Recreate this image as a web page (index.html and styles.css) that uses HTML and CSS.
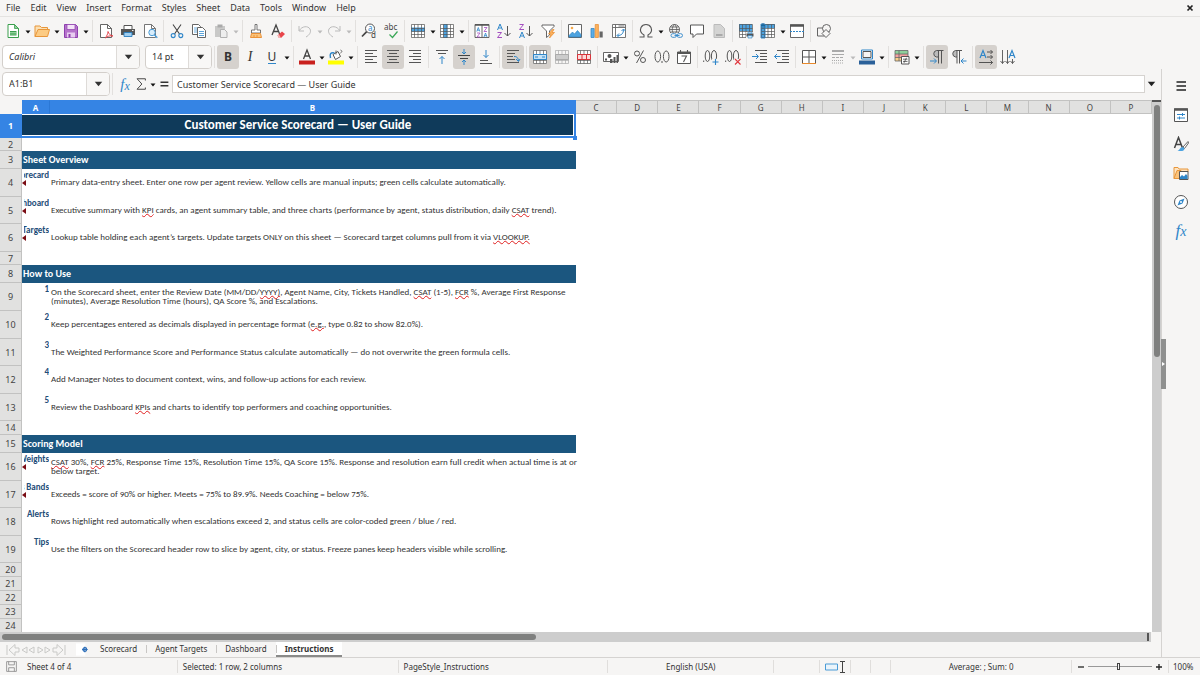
FILE: index.html
```html
<!DOCTYPE html>
<html lang="en">
<head>
<meta charset="utf-8">
<title>Customer Service Scorecard</title>
<link rel="stylesheet" href="styles.css">
</head>
<body>
<svg class="sprite" aria-hidden="true">
  <defs>
    <symbol id="caret" viewBox="0 0 6 4"><path d="M0.5 0.5h5L3 3.5z" fill="currentColor"/></symbol>
    <symbol id="grid" viewBox="0 0 16 16"><path d="M1.500 1.500h13v13h-13zM1.500 5.500h13M1.500 8.500h13M1.500 11.500h13M4.500 1.500v13M8 1.500v13M11.500 1.500v13" fill="none" stroke="currentColor" stroke-width=".7"/></symbol>
  </defs>
</svg>

<nav class="menubar">
  <button>File</button><button>Edit</button><button>View</button><button>Insert</button><button>Format</button><button>Styles</button><button>Sheet</button><button>Data</button><button>Tools</button><button>Window</button><button>Help</button>
  <button class="close" aria-label="Close document"><svg viewBox="0 0 8 8"><path d="M1.500 1.500l5 5M6.500 1.500l-5 5" stroke="#222" stroke-width="1.700"/></svg></button>
</nav>

<div class="toolbar">
  <button class="tb" aria-label="New"><svg viewBox="0 0 16 16"><path d="M3 1.500h6.500l4 4v9H3z" fill="#fff" stroke="#3a9e4d"/><path d="M9.500 1.500v4h4z" fill="#8fd19b" stroke="#3a9e4d" stroke-width=".8"/><path d="M5 8h6.500v4.500H5z" fill="#3a9e4d"/><path d="M5 9.500h6.500M5 11h6.500" stroke="#c8f0cd" stroke-width=".6"/></svg></button><button class="dd" aria-label="New options"><svg><use href="#caret"/></svg></button>
  <button class="tb" aria-label="Open"><svg viewBox="0 0 16 16"><path d="M1 13.500V3h5l1.500 1.500h6V7" fill="#fbe0b4" stroke="#e8963a"/><path d="M1 13.500L4 6.500h11.500l-2 7z" fill="#fccb83" stroke="#e8963a"/></svg></button><button class="dd" aria-label="Open options"><svg><use href="#caret"/></svg></button>
  <button class="tb" aria-label="Save"><svg viewBox="0 0 16 16"><path d="M1.500 1.500h11l2 2v11h-13z" fill="#b573cb" stroke="#8e3fae"/><path d="M4 1.500h8v5H4z" fill="#f4e3f8" stroke="#8e3fae" stroke-width=".7"/><path d="M4 9.500h8v5H4z" fill="#e8cdf0"/><path d="M5.500 11v3.500h2V11z" fill="#8e3fae"/></svg></button><button class="dd" aria-label="Save options"><svg><use href="#caret"/></svg></button>
  <i class="sep"></i>
  <button class="tb" aria-label="Export as PDF"><svg viewBox="0 0 16 16"><path d="M2.500 1.500h7l4 4v9h-11z" fill="#fff" stroke="#555" stroke-width=".9"/><path d="M9.500 1.500v4h4" fill="none" stroke="#555" stroke-width=".9"/><path d="M7.500 15c1-2 2.500-4 2.500-6.500 1 2.500 2 4 5 4.500-3-.5-5.500 0-7.500 2z" fill="#fff" stroke="#e0383f" stroke-width=".9"/></svg></button>
  <button class="tb" aria-label="Print"><svg viewBox="0 0 16 16"><path d="M4 6V2.500h8V6" fill="#fff" stroke="#555"/><path d="M1 6h14v6H1z" fill="#555"/><path d="M4 9.500h8v4H4z" fill="#9fcdef" stroke="#2a7fc0" stroke-width=".9"/><path d="M12 7.500h1.500" stroke="#fff" stroke-width=".9"/></svg></button>
  <button class="tb" aria-label="Print preview"><svg viewBox="0 0 16 16"><path d="M2.500 1.500h7l4 4v9h-11z" fill="#fff" stroke="#666" stroke-width=".9"/><path d="M9.500 1.500v4h4" fill="none" stroke="#666" stroke-width=".9"/><circle cx="10" cy="9.500" r="3.200" fill="#d8edfb" stroke="#4a9bd6"/><path d="M12.300 11.800l3 3" stroke="#4a9bd6" stroke-width="1.400"/></svg></button>
  <i class="sep"></i>
  <button class="tb" aria-label="Cut"><svg viewBox="0 0 16 16"><path d="M4 1.500l6.500 9.500M12 1.500L5.500 11" stroke="#444" stroke-width="1.100"/><circle cx="4.200" cy="12.600" r="2" fill="none" stroke="#2f86c9" stroke-width="1.100"/><circle cx="11.800" cy="12.600" r="2" fill="none" stroke="#2f86c9" stroke-width="1.100"/></svg></button>
  <button class="tb" aria-label="Copy"><svg viewBox="0 0 16 16"><path d="M1.500 1.500h6l2 2v8h-8z" fill="#fff" stroke="#555" stroke-width=".9"/><path d="M3 5h3M3 7h3M3 9h3" stroke="#4a9bd6" stroke-width=".8"/><path d="M6.500 4.500h5l3 3v7h-8z" fill="#fff" stroke="#555" stroke-width=".9"/><path d="M8 8.500h5M8 10.500h5M8 12.500h5" stroke="#4a9bd6" stroke-width=".9"/></svg></button>
  <button class="tb" aria-label="Paste" disabled><svg viewBox="0 0 16 16"><path d="M2 3h10v11H2z" fill="#c9c9c8"/><path d="M4.500 1.500h5v3h-5z" fill="#aaa"/><path d="M7.500 6.500h4l2.500 2.500v5.500H7.500z" fill="#eee" stroke="#aaa" stroke-width=".9"/></svg></button><button class="dd" aria-label="Paste options" disabled><svg><use href="#caret"/></svg></button>
  <i class="sep"></i>
  <button class="tb" aria-label="Clone formatting"><svg viewBox="0 0 16 16"><path d="M7 1.500h2v5.500h3.500v3h-9V7H7z" fill="#fff" stroke="#666" stroke-width=".9"/><path d="M3.500 10.500h9l1 4h-11z" fill="#fbc37b" stroke="#e98a2b" stroke-width=".9"/><path d="M6 14v-2M9 14v-2" stroke="#e98a2b" stroke-width=".8"/></svg></button>
  <button class="tb" aria-label="Clear formatting"><svg viewBox="0 0 16 16"><path d="M2 12L6 2l4 10M3.500 8.500h5" fill="none" stroke="#444" stroke-width="1.300"/><path d="M7.500 12.500l4.500-4 3 2.500-4 4H9z" fill="#e8454a"/><path d="M7.500 12.500L9 15h2l-2.200-3.700z" fill="#f6b4b4"/></svg></button>
  <i class="sep"></i>
  <button class="tb" aria-label="Undo" disabled><svg viewBox="0 0 16 16"><path d="M2 3v5h5M2.300 7.500C5 3 11 2.500 13 6c1.500 3-.5 6-4 8" fill="none" stroke="#bbb"/></svg></button><button class="dd" aria-label="Undo history" disabled><svg><use href="#caret"/></svg></button>
  <button class="tb" aria-label="Redo" disabled><svg viewBox="0 0 16 16"><path d="M14 3v5H9M13.700 7.500C11 3 5 2.500 3 6c-1.500 3 .5 6 4 8" fill="none" stroke="#bbb"/></svg></button><button class="dd" aria-label="Redo history" disabled><svg><use href="#caret"/></svg></button>
  <i class="sep"></i>
  <button class="tb" aria-label="Find and replace"><svg viewBox="0 0 16 16"><circle cx="9" cy="5.500" r="4.500" fill="#fff" stroke="#555"/><path d="M5.700 8.700L1 13.500" stroke="#444" stroke-width="1.700"/><text x="7" y="8" class="g-blue">a</text><text x="10" y="15" class="g-dark">d</text></svg></button>
  <button class="tb" aria-label="Spelling"><svg viewBox="0 0 16 16"><text x="1" y="7" class="g-dark">abc</text><path d="M6.500 11.500l3 3 5-6" fill="none" stroke="#3aa757" stroke-width="1.200"/></svg></button>
  <i class="sep"></i>
  <button class="tb" aria-label="Row"><svg viewBox="0 0 16 16"><path d="M1.500 1.500h13v13h-13z" fill="#fff"/><path d="M1 4.500h14v4H1z" fill="#4da3e0"/><use href="#grid"/></svg></button><button class="dd" aria-label="Row options"><svg><use href="#caret"/></svg></button>
  <button class="tb" aria-label="Column"><svg viewBox="0 0 16 16"><path d="M1.500 1.500h13v13h-13z" fill="#fff"/><path d="M4.500 1h4v14h-4z" fill="#4da3e0"/><use href="#grid"/></svg></button><button class="dd" aria-label="Column options"><svg><use href="#caret"/></svg></button>
  <i class="sep"></i>
  <button class="tb" aria-label="Sort"><svg viewBox="0 0 16 16"><path d="M1 1.500h14v13H1zM8 1.500v13" fill="#fff" stroke="#555" stroke-width=".9"/><path d="M1 2h14" stroke="#555" stroke-width="1.500"/><path d="M2.800 8.500l1.500-4 1.500 4M3.300 7.200h2M10 14l1.500-4 1.500 4M10.500 12.700h2" fill="none" stroke="#2f86c9" stroke-width=".8"/><path d="M3 10h3l-3 4h3M10 4.500h3l-3 4h3" fill="none" stroke="#a44fc0" stroke-width=".8"/></svg></button>
  <button class="tb" aria-label="Sort ascending"><svg viewBox="0 0 16 16"><path d="M1.500 7L4 1l2.500 6M2.500 5h3" fill="none" stroke="#2f86c9"/><path d="M1.500 9.500h4l-4 5h4.500" fill="none" stroke="#a44fc0"/><path d="M11.500 3v10M8.500 10l3 3 3-3" fill="none" stroke="#555"/></svg></button>
  <button class="tb" aria-label="Sort descending"><svg viewBox="0 0 16 16"><path d="M1.500 15L4 9l2.500 6M2.500 13h3" fill="none" stroke="#2f86c9"/><path d="M1.500 1.500h4l-4 5h4.500" fill="none" stroke="#a44fc0"/><path d="M11.500 3v10M8.500 10l3 3 3-3" fill="none" stroke="#555"/></svg></button>
  <button class="tb" aria-label="AutoFilter"><svg viewBox="0 0 16 16"><path d="M2 2h12v1.500L9.500 8v4l-3 2.500V8L2 3.500z" fill="#fff" stroke="#555" stroke-width=".9"/><path d="M12.500 6.500L8.500 11h2.500l-1.500 4 5-5.500H12l2-3z" fill="#fbb25f" stroke="#e98a2b" stroke-width=".7"/></svg></button>
  <i class="sep"></i>
  <button class="tb" aria-label="Image"><svg viewBox="0 0 16 16"><path d="M1.500 1.500h13v13h-13z" fill="#fff" stroke="#666"/><path d="M2 12.500L5.500 9l2 2 3-3.500 3.500 4v2.500H2z" fill="#4da3e0" stroke="#2a7fc0" stroke-width=".6"/><circle cx="5" cy="5" r="1.300" fill="#f5a94c"/></svg></button>
  <button class="tb" aria-label="Chart"><svg viewBox="0 0 16 16"><path d="M2 5.500h3.200v9H2z" fill="#5baee8" stroke="#2a7fc0" stroke-width=".7"/><path d="M6.200 1.500h3.200v13H6.200z" fill="#fbb25f" stroke="#e98a2b" stroke-width=".7"/><path d="M10.500 8.500h3.200v6h-3.200z" fill="#666"/></svg></button>
  <button class="tb" aria-label="Pivot table"><svg viewBox="0 0 16 16"><path d="M1.500 1.500h13v13h-13zM1.500 4.500h13M4.500 1.500v13M7.500 3h6" fill="#fff" stroke="#666" stroke-width=".9"/><path d="M6.500 12.500c4 0 6-2 6-6M8 10.500l-2 2 2 2M10.500 8l2-2 2 2" fill="none" stroke="#2f86c9"/></svg></button>
  <i class="sep"></i>
  <button class="tb" aria-label="Special character"><svg viewBox="0 0 16 16"><path d="M1.500 14h4.500v-2C2.500 10 2 7 3 4.500 4 2.500 6 1.500 8 1.500s4 1 5 3c1 2.500.5 5.500-3 7.500v2h4.500" fill="none" stroke="#555" stroke-width="1.100"/></svg></button><button class="dd" aria-label="Special character options"><svg><use href="#caret"/></svg></button>
  <button class="tb" aria-label="Hyperlink"><svg viewBox="0 0 16 16"><circle cx="7.500" cy="6.500" r="5" fill="none" stroke="#555" stroke-width=".9"/><path d="M2.500 6.500h10M3.500 4h8M3.500 9h8M7.500 1.500c-3 3-3 7 0 10M7.500 1.500c3 3 3 7 0 10" fill="none" stroke="#555" stroke-width=".8"/><path d="M4 10h12v5H4z" fill="#f6f5f4"/><rect x="4" y="10.700" width="5.500" height="3.600" rx="1.800" fill="none" stroke="#2f86c9" stroke-width=".9"/><rect x="10" y="10.700" width="5.500" height="3.600" rx="1.800" fill="none" stroke="#2f86c9" stroke-width=".9"/><path d="M7.500 12.500h5" stroke="#2f86c9" stroke-width=".9"/></svg></button>
  <button class="tb" aria-label="Comment"><svg viewBox="0 0 16 16"><path d="M1.500 2h13v9H7.500L4 14.500V11H1.500z" fill="#fff" stroke="#555"/></svg></button>
  <button class="tb" aria-label="Headers and footers" disabled><svg viewBox="0 0 16 16"><path d="M3 1.500h6.500l4 4v9H3z" fill="#d4d4d3" stroke="#bbb"/><path d="M5 11h6.500v2H5z" fill="#aaa"/></svg></button>
  <i class="sep"></i>
  <button class="tb" aria-label="Print area"><svg viewBox="0 0 16 16"><path d="M1.500 1.500h13v13h-13z" fill="#fff"/><path d="M1 1h13v7H1z" fill="#4da3e0"/><use href="#grid"/><path d="M8 9h8v6H8z" fill="#f6f5f4"/><path d="M8.500 10.500h7v3h-7z" fill="#555"/><path d="M10 9h4v1.500h-4zM10 12.500h4V15h-4z" fill="#cfe6f7" stroke="#2a7fc0" stroke-width=".6"/></svg></button>
  <button class="tb" aria-label="Freeze rows and columns"><svg viewBox="0 0 16 16"><path d="M1.500 1.500h13v13h-13z" fill="#fff"/><path d="M1 1h14v4H1zM1 1h4v14H1z" fill="#4da3e0"/><use href="#grid"/><path d="M1 1h4v14H1z" fill="none" stroke="#2a7fc0" stroke-width=".9"/><path d="M3 0v5M1 2.500h4" stroke="#12659f" stroke-width=".9"/></svg></button><button class="dd" aria-label="Freeze options"><svg><use href="#caret"/></svg></button>
  <button class="tb" aria-label="Split window"><svg viewBox="0 0 16 16"><path d="M1.500 2h13v12.500h-13z" fill="#fff" stroke="#666"/><path d="M1 2.500h14" stroke="#555" stroke-width="2.500"/><path d="M1 8.500h14" stroke="#2f86c9" stroke-dasharray="2 1"/></svg></button>
  <i class="sep"></i>
  <button class="tb" aria-label="Draw functions"><svg viewBox="0 0 16 16"><path d="M1.500 5h7v8h-7z" fill="#f6f5f4" stroke="#555" stroke-width=".9"/><circle cx="10.500" cy="5.500" r="4" fill="#f6f5f4" stroke="#555" stroke-width=".9"/><path d="M10 6.500l4 4-4 4-4-4z" fill="#f6f5f4" stroke="#555" stroke-width=".9"/></svg></button>
</div>

<div class="toolbar format">
  <div class="combo font"><input type="text" value="Calibri" aria-label="Font name"><button aria-label="Font list"><svg><use href="#caret"/></svg></button></div>
  <div class="combo size"><input type="text" value="14 pt" aria-label="Font size"><button aria-label="Size list"><svg><use href="#caret"/></svg></button></div>
  <i class="sep"></i>
  <button class="tb on" aria-label="Bold"><span class="letter bold">B</span></button>
  <button class="tb" aria-label="Italic"><span class="letter italic">I</span></button>
  <button class="tb" aria-label="Underline"><span class="letter under">U</span></button><button class="dd" aria-label="Underline options"><svg><use href="#caret"/></svg></button>
  <i class="sep"></i>
  <button class="tb" aria-label="Font color"><svg viewBox="0 0 16 16"><path d="M4.500 10L8 1l3.500 9M5.500 7h5" fill="none" stroke="#444" stroke-width="1.300"/><path d="M0 11.500h16v4H0z" fill="#c9211e"/></svg></button><button class="dd" aria-label="Font color options"><svg><use href="#caret"/></svg></button>
  <button class="tb" aria-label="Background color"><svg viewBox="0 0 16 16"><path d="M5 5.500l5-3 2.500 5-5 3z" fill="#fff" stroke="#555"/><path d="M8 1.500v4M12.500 4c2-1 1.500-2.500 0-3" fill="none" stroke="#555" stroke-width=".9"/><path d="M2.500 9c-1-4 0-6 4-5" fill="none" stroke="#2f86c9" stroke-width="1.500"/><path d="M0 11.500h16v4H0z" fill="#ffff00"/></svg></button><button class="dd" aria-label="Background color options"><svg><use href="#caret"/></svg></button>
  <i class="sep"></i>
  <button class="tb" aria-label="Align left"><svg viewBox="0 0 16 16"><path d="M2 1.500h12M2 4.500h8M2 7.500h12M2 10.500h8M2 13.500h12" stroke="#555"/></svg></button>
  <button class="tb on" aria-label="Center horizontally"><svg viewBox="0 0 16 16"><path d="M2 1.500h12M4 4.500h8M2 7.500h12M4 10.500h8M2 13.500h12" stroke="#555"/></svg></button>
  <button class="tb" aria-label="Align right"><svg viewBox="0 0 16 16"><path d="M2 1.500h12M6 4.500h8M2 7.500h12M6 10.500h8M2 13.500h12" stroke="#555"/></svg></button>
  <i class="sep"></i>
  <button class="tb" aria-label="Align top"><svg viewBox="0 0 16 16"><path d="M2 1.500h12M4 4.500h8" stroke="#555"/><path d="M8 15V7.500M5.500 10L8 7.500 10.500 10" fill="none" stroke="#2f86c9"/></svg></button>
  <button class="tb on" aria-label="Center vertically"><svg viewBox="0 0 16 16"><path d="M2 6.500h12M4 9.500h8" stroke="#444"/><path d="M8 0v5M6 3l2 2 2-2M8 16v-5M6 13l2-2 2 2" fill="none" stroke="#2f86c9"/></svg></button>
  <button class="tb" aria-label="Align bottom"><svg viewBox="0 0 16 16"><path d="M2 11.500h8M2 14.500h12" stroke="#555"/><path d="M8 1v7.500M5.500 6L8 8.500 10.500 6" fill="none" stroke="#2f86c9"/></svg></button>
  <i class="sep"></i>
  <button class="tb on" aria-label="Wrap text"><svg viewBox="0 0 16 16"><path d="M2 1.500h12M2 4.500h8M2 7.500h6M2 10.500h8M2 13.500h12" stroke="#555"/><path d="M9 7.500c3 0 4 1 4.500 4.500M11 10l2.500 2.500L15 10" fill="none" stroke="#2f86c9"/></svg></button>
  <i class="sep"></i>
  <button class="tb on" aria-label="Merge and center"><svg viewBox="0 0 16 16"><path d="M1 1h14v14H1z" fill="#fff"/><use href="#grid"/><path d="M1.500 5.500h13v5h-13z" fill="#c6e2f6" stroke="#2f86c9"/><path d="M3 8h3M10 8h3" stroke="#2f86c9"/></svg></button>
  <button class="tb" aria-label="Merge cells" disabled><svg viewBox="0 0 16 16"><g color="#aaa"><use href="#grid"/></g><path d="M1.500 5.500h13v5h-13z" fill="#ccc" stroke="#aaa"/></svg></button>
  <button class="tb" aria-label="Unmerge cells"><svg viewBox="0 0 16 16"><path d="M1.500 1.500h13v13h-13z" fill="#fff"/><use href="#grid"/><path d="M1.500 5.500h13v5h-13zM6 5.500v5M10.500 5.500v5" fill="#fbdada" stroke="#d8343a"/></svg></button>
  <i class="sep"></i>
  <button class="tb" aria-label="Format as currency"><svg viewBox="0 0 16 16"><path d="M.5 3.500h15v9H.5z" fill="#fff" stroke="#555" stroke-width=".9"/><circle cx="6.500" cy="7" r="2" fill="#555"/><path d="M2 9.500h2v2H2zM7 10h2.500v4H7zM10.500 8h2v6h-2zM13.500 6H15v8h-1.500z" fill="#555"/></svg></button><button class="dd" aria-label="Currency options"><svg><use href="#caret"/></svg></button>
  <button class="tb" aria-label="Format as percent"><svg viewBox="0 0 16 16"><circle cx="5" cy="4.500" r="2.500" fill="none" stroke="#555"/><circle cx="11" cy="11" r="2.500" fill="none" stroke="#555"/><path d="M11.500 1.500L4.500 14" stroke="#555"/></svg></button>
  <button class="tb" aria-label="Format as number"><svg viewBox="0 0 16 16"><ellipse cx="3.800" cy="7.500" rx="2.800" ry="5.500" fill="none" stroke="#555"/><ellipse cx="12.200" cy="7.500" rx="2.800" ry="5.500" fill="none" stroke="#555"/><path d="M8 12v2" stroke="#555"/></svg></button>
  <button class="tb" aria-label="Format as date"><svg viewBox="0 0 16 16"><path d="M1.500 3h13v11.500h-13z" fill="#fff" stroke="#555"/><path d="M1 4h14" stroke="#555" stroke-width="2"/><path d="M4.500 1v3M11.500 1v3M5.500 7h5L7.500 13" fill="none" stroke="#555" stroke-width="1.100"/></svg></button>
  <i class="sep"></i>
  <button class="tb" aria-label="Add decimal place"><svg viewBox="0 0 16 16"><ellipse cx="4.500" cy="7" rx="2.300" ry="5.500" fill="none" stroke="#555"/><ellipse cx="11" cy="7" rx="2.600" ry="5.500" fill="none" stroke="#555"/><path d="M.7 11.500v1.500" stroke="#555"/><path d="M9 10h7v6H9z" fill="#f6f5f4"/><path d="M12.500 10v6M9.500 13h6" stroke="#2f86c9" stroke-width="1.100"/></svg></button>
  <button class="tb" aria-label="Delete decimal place"><svg viewBox="0 0 16 16"><ellipse cx="4.500" cy="7" rx="2.300" ry="5.500" fill="none" stroke="#555"/><ellipse cx="11" cy="7" rx="2.600" ry="5.500" fill="none" stroke="#555"/><path d="M.7 11.500v1.500" stroke="#555"/><path d="M9 10h7v6H9z" fill="#f6f5f4"/><path d="M10 10l5.500 5.500M15.500 10L10 15.500" stroke="#e0383f" stroke-width="1.100"/></svg></button>
  <i class="sep"></i>
  <button class="tb" aria-label="Increase indent"><svg viewBox="0 0 16 16"><path d="M3 1.500h12M8 4.500h7M8 7.500h7M8 10.500h7M3 13.500h12" stroke="#555"/><path d="M0 7.500h6M4 5l2.500 2.500L4 10" fill="none" stroke="#2f86c9"/></svg></button>
  <button class="tb" aria-label="Decrease indent"><svg viewBox="0 0 16 16"><path d="M3 1.500h12M8 4.500h7M8 7.500h7M8 10.500h7M3 13.500h12" stroke="#555"/><path d="M6.500 7.500h-6M3 5L.5 7.500 3 10" fill="none" stroke="#2f86c9"/></svg></button>
  <i class="sep"></i>
  <button class="tb" aria-label="Borders"><svg viewBox="0 0 16 16"><path d="M1.500 14V1.500h13V14M8 1.500v12.500M1.500 8h13" fill="#fff" stroke="#555"/><path d="M1 14.500h14" stroke="#e98a2b"/></svg></button><button class="dd" aria-label="Border options"><svg><use href="#caret"/></svg></button>
  <button class="tb" aria-label="Border style" disabled><svg viewBox="0 0 16 16"><path d="M2 2h12" stroke="#aaa" stroke-width="2"/><path d="M2 5.500h12" stroke="#aaa"/><path d="M2 8.500h12" stroke="#aaa" stroke-dasharray="3 1"/><path d="M2 11.500h12M2 14h12" stroke="#aaa" stroke-dasharray="1 1"/></svg></button><button class="dd" aria-label="Border style options" disabled><svg><use href="#caret"/></svg></button>
  <button class="tb" aria-label="Border color"><svg viewBox="0 0 16 16"><path d="M2.500 1h11v9h-11z" fill="#fff" stroke="#2f86c9"/><path d="M4 2.500h8v6H4z" fill="#f6f5f4" stroke="#555"/><path d="M0 11.500h16v4H0z" fill="#2a6099"/></svg></button><button class="dd" aria-label="Border color options"><svg><use href="#caret"/></svg></button>
  <i class="sep"></i>
  <button class="tb" aria-label="Conditional formatting"><svg viewBox="0 0 16 16"><path d="M1 1.500h13v3.500H1z" fill="#8fd19b"/><path d="M1 5h13v3.500H1z" fill="#f4a0a0"/><path d="M1 8.500h13V12H1z" fill="#fbd08a"/><path d="M1 1.500h13V12H1zM1 5h13M1 8.500h13M5 1.500V12" fill="none" stroke="#666" stroke-width=".8"/><path d="M7.500 7.500h7.500v7.500H7.500z" fill="#fff" stroke="#555"/><path d="M9 10.200h4.500M9 12.400h4.500M12.500 8.800l-2.500 5" stroke="#444" stroke-width=".8"/></svg></button><button class="dd" aria-label="Conditional options"><svg><use href="#caret"/></svg></button>
  <i class="sep"></i>
  <button class="tb on" aria-label="Left to right"><svg viewBox="0 0 16 16"><path d="M10 1.500H7.500a3.300 3.300 0 000 6.500H9.500z" fill="#bbb"/><path d="M14.500 1.500H7.500a3.300 3.300 0 000 6.500H9.500M9.500 1.500v13M12.500 1.500v13" fill="none" stroke="#555"/><path d="M1 12h6M5 9.500L7.500 12 5 14.500" fill="none" stroke="#2f86c9"/></svg></button>
  <button class="tb" aria-label="Right to left"><svg viewBox="0 0 16 16"><path d="M6 1.500H4.500a3.300 3.300 0 000 6.500H6z" fill="#bbb"/><path d="M11 1.500H4.500a3.300 3.300 0 000 6.500H6M6 1.500v13M8.500 1.500v13" fill="none" stroke="#555"/><path d="M15.500 12h-5M12.500 9.500L10 12l2.500 2.500" fill="none" stroke="#2f86c9"/></svg></button>
  <i class="sep"></i>
  <button class="tb on" aria-label="Text direction left to right"><svg viewBox="0 0 16 16"><path d="M2 9L5 1.500 8 9M3 6.500h4" fill="none" stroke="#2f86c9" stroke-width="1.200"/><path d="M9 3h5.500M9 8h5.500M1 13.500h13.500M12.500 1l2 2-2 2M12.500 6l2 2-2 2M12.500 11.500l2 2-2 2" fill="none" stroke="#444" stroke-width=".9"/></svg></button>
  <button class="tb" aria-label="Text direction top to bottom"><svg viewBox="0 0 16 16"><path d="M9 9l3-7.500L15 9M10 6.500h4" fill="none" stroke="#2f86c9" stroke-width="1.200"/><path d="M2.500 1v13.500M7.500 1v13.500M12.500 10v4.500M.5 12l2 2.500 2-2.500M5.500 12l2 2.500 2-2.500M10.500 12l2 2.500 2-2.500" fill="none" stroke="#555" stroke-width=".9"/></svg></button>
</div>

<main class="work">
  <section class="doc">
    <div class="formula">
      <div class="combo name"><input type="text" value="A1:B1" aria-label="Name box"><button aria-label="Name list"><svg><use href="#caret"/></svg></button></div>
      <i class="sep"></i>
      <button class="fx" aria-label="Function wizard"><em>f</em><em>x</em></button>
      <button class="sum" aria-label="Select function"><svg viewBox="0 0 16 16"><path d="M13 4V2H3.500l5.500 6-5.500 6H13v-2" fill="none" stroke="#444" stroke-width="1.100"/></svg></button><button class="dd" aria-label="Function options"><svg><use href="#caret"/></svg></button>
      <button class="sum" aria-label="Formula"><svg viewBox="0 0 16 16"><path d="M4 6h9M4 10h9" stroke="#333" stroke-width="1.500"/></svg></button>
      <input class="line" type="text" value="Customer Service Scorecard — User Guide" aria-label="Formula input">
      <button class="expand" aria-label="Expand formula bar"><svg><use href="#caret"/></svg></button>
    </div>

    <div class="pane">
      <div class="sheet">
        <table>
          <colgroup><col class="c-num"><col class="c-a"><col class="c-b"><col span="14"></colgroup>
          <thead><tr><th></th><th class="sel first">A</th><th class="sel">B</th><th>C</th><th>D</th><th>E</th><th>F</th><th>G</th><th>H</th><th>I</th><th>J</th><th>K</th><th>L</th><th>M</th><th>N</th><th>O</th><th>P</th></tr></thead>
          <tbody>
            <tr class="title"><th class="sel">1</th><td colspan="2"><div class="cursor">Customer Service Scorecard — User Guide</div></td><td colspan="14"></td></tr>
            <tr class="short"><th>2</th><td colspan="16"></td></tr>
            <tr class="head"><th>3</th><td colspan="2">Sheet Overview</td><td colspan="14"></td></tr>
            <tr class="tall"><th>4</th><td class="key cut"><div>Scorecard</div></td><td class="txt">Primary data-entry sheet. Enter one row per agent review. Yellow cells are manual inputs; green cells calculate automatically.</td><td colspan="14"></td></tr>
            <tr class="full"><th>5</th><td class="key cut"><div>Dashboard</div></td><td class="txt">Executive summary with <u>KPI</u> cards, an agent summary table, and three charts (performance by agent, status distribution, daily <u>CSAT</u> trend).</td><td colspan="14"></td></tr>
            <tr class="tall"><th>6</th><td class="key cut"><div>Agent Targets</div></td><td class="txt">Lookup table holding each agent’s targets. Update targets ONLY on this sheet — Scorecard target columns pull from it via <u>VLOOKUP.</u></td><td colspan="14"></td></tr>
            <tr class="short"><th>7</th><td colspan="16"></td></tr>
            <tr class="head"><th>8</th><td colspan="2">How to Use</td><td colspan="14"></td></tr>
            <tr class="tall"><th>9</th><td class="key"><div>1</div></td><td class="txt">On the Scorecard sheet, enter the Review Date (MM/DD/<u>YYYY)</u>, Agent Name, City, Tickets Handled, <u>CSAT</u> (1-5), <u>FCR</u> %, Average First Response<br>(minutes), Average Resolution Time (hours), QA Score %, and Escalations.</td><td colspan="14"></td></tr>
            <tr class="tall"><th>10</th><td class="key"><div>2</div></td><td class="txt">Keep percentages entered as decimals displayed in percentage format (<u>e.g.</u>, type 0.82 to show 82.0%).</td><td colspan="14"></td></tr>
            <tr class="full"><th>11</th><td class="key"><div>3</div></td><td class="txt">The Weighted Performance Score and Performance Status calculate automatically — do not overwrite the green formula cells.</td><td colspan="14"></td></tr>
            <tr class="tall"><th>12</th><td class="key"><div>4</div></td><td class="txt">Add Manager Notes to document context, wins, and follow-up actions for each review.</td><td colspan="14"></td></tr>
            <tr class="full"><th>13</th><td class="key"><div>5</div></td><td class="txt">Review the Dashboard <u>KPIs</u> and charts to identify top performers and coaching opportunities.</td><td colspan="14"></td></tr>
            <tr class="line14"><th>14</th><td colspan="16"></td></tr>
            <tr class="head"><th>15</th><td colspan="2">Scoring Model</td><td colspan="14"></td></tr>
            <tr class="tall"><th>16</th><td class="key cut"><div>Weights</div></td><td class="txt"><u>CSAT</u> 30%, <u>FCR</u> 25%, Response Time 15%, Resolution Time 15%, QA Score 15%. Response and resolution earn full credit when actual time is at or<br>below target.</td><td colspan="14"></td></tr>
            <tr class="full"><th>17</th><td class="key cut"><div>Status Bands</div></td><td class="txt">Exceeds = score of 90% or higher. Meets = 75% to 89.9%. Needs Coaching = below 75%.</td><td colspan="14"></td></tr>
            <tr class="tall"><th>18</th><td class="key"><div>Alerts</div></td><td class="txt">Rows highlight red automatically when escalations exceed 2, and status cells are color-coded green / blue / red.</td><td colspan="14"></td></tr>
            <tr class="full"><th>19</th><td class="key"><div>Tips</div></td><td class="txt">Use the filters on the Scorecard header row to slice by agent, city, or status. Freeze panes keep headers visible while scrolling.</td><td colspan="14"></td></tr>
            <tr class="line14"><th>20</th><td colspan="16"></td></tr>
            <tr class="line14"><th>21</th><td colspan="16"></td></tr>
            <tr class="line14"><th>22</th><td colspan="16"></td></tr>
            <tr class="line14"><th>23</th><td colspan="16"></td></tr>
            <tr class="line14"><th>24</th><td colspan="16"></td></tr>
          </tbody>
        </table>
      </div>
      <div class="vscroll"><div class="thumb"></div></div>
    </div>
    <div class="hscroll"><div class="track"><div class="thumb"></div><span class="split"></span></div></div>
    <div class="tabs">
      <div class="nav">
        <svg viewBox="0 0 60 12" fill="none" stroke="#c9c9c7"><path d="M1 1v10M59 1v10M9 .5L3 6l6 5.500V8h4V4H9zM51 .5L57 6l-6 5.500V8h-4V4h4zM21 3l-5 3 5 3zM28 3l-5 3 5 3zM32 3l5 3-5 3zM39 3l5 3-5 3z"/></svg>
      </div>
      <button class="add" aria-label="Add sheet"><svg viewBox="0 0 16 16"><path d="M1 1.500h10v13H1z" fill="#fff"/><circle cx="10.500" cy="8" r="2" fill="none" stroke="#2a6cb8" stroke-width="1.200"/><path d="M10.500 5v6M7.500 8h6" stroke="#2a6cb8"/></svg></button>
      <button class="tab">Scorecard</button><button class="tab">Agent Targets</button><button class="tab">Dashboard</button><button class="tab active">Instructions</button>
    </div>
  </section>
  <aside class="sidebar">
    <div class="grip"></div>
    <button aria-label="Sidebar settings"><svg viewBox="0 0 16 16"><path d="M3.500 4h9.500M3.500 8h9.500M3.500 12h9.500" stroke="#222" stroke-width="1.300"/></svg></button>
    <button aria-label="Properties"><svg viewBox="0 0 16 16"><path d="M1.500 2h13v12.500h-13z" fill="#fff" stroke="#555"/><path d="M1 2.500h14" stroke="#555" stroke-width="2.500"/><path d="M4 7.500h8M4 11h8M9.500 6v3M6.500 9.500v3" stroke="#2f86c9"/></svg></button>
    <button aria-label="Styles"><svg viewBox="0 0 16 16"><path d="M1.500 12L5.500 1.500 9.500 12M3 8.500h5" fill="none" stroke="#444" stroke-width="1.500"/><path d="M15 5.500L10 11l1.500 1.500 4-5.500z" fill="#fff" stroke="#555" stroke-width=".9"/><path d="M4.500 14.500c2 0 2.500-3.500 5.500-3.500l1.500 1.500c0 3-4 3-7 2z" fill="#4da3e0"/></svg></button>
    <button aria-label="Gallery"><svg viewBox="0 0 16 16"><path d="M1 13.500V2.500h4l1 1.500h9v3" fill="#fde3c0" stroke="#e8963a"/><path d="M1 13.500L4 5.500h4v8z" fill="#fbc37b" stroke="#e8963a"/><path d="M6.500 6.500h8.500v8H6.500z" fill="#fff" stroke="#555"/><path d="M7 14v-2l2-2 2 1.500 2-2.500 1.500 2v3z" fill="#2f86c9"/></svg></button>
    <button aria-label="Navigator"><svg viewBox="0 0 16 16"><circle cx="8" cy="8" r="6.500" fill="#fff" stroke="#555"/><path d="M11.500 4.500L9.500 9.500 4.500 11.500 6.500 6.500z" fill="#2f86c9"/><circle cx="8" cy="8" r="1" fill="#fff"/></svg></button>
    <button class="fx" aria-label="Functions"><em>f</em><em>x</em></button>
  </aside>
</main>

<footer class="status">
  <span class="save"><svg viewBox="0 0 16 16"><path d="M2 2h12v12H2zM4.500 2v4h7V2M4.500 14V9.500h7V14" fill="none" stroke="#888"/></svg></span>
  <span>Sheet 4 of 4</span>
  <span class="bar">Selected: 1 row, 2 columns</span>
  <span class="bar">PageStyle_Instructions</span>
  <span class="bar center">English (USA)</span>
  <span class="bar"></span>
  <span class="bar"><svg class="mode" viewBox="0 0 22 14"><path d="M.5 4h12v6H.5z" fill="#eaf4fb" stroke="#4a9bd6"/><path d="M15 1.500h5M15 12.500h5M17.500 1.500v11" stroke="#444"/></svg></span>
  <span class="bar"></span>
  <span class="bar"></span>
  <span class="bar center">Average: ; Sum: 0</span>
  <span class="bar zoom"><button aria-label="Zoom out"><svg viewBox="0 0 8 8"><path d="M1 4h6" stroke="#222" stroke-width="1.300"/></svg></button><input type="range" min="0" max="100" value="48" aria-label="Zoom"><button aria-label="Zoom in"><svg viewBox="0 0 8 8"><path d="M1 4h6M4 1v6" stroke="#222" stroke-width="1.300"/></svg></button></span>
  <span class="bar last">100%</span>
</footer>
</body>
</html>
```
FILE: styles.css
```css
* { box-sizing: border-box; }
html, body { height: 100%; }
body {
  margin: 0;
  display: flex;
  flex-direction: column;
  overflow: hidden;
  background: #f6f5f4;
  color: #333;
  font: 9px/12px "Noto Sans", sans-serif;
}
button, input { font: inherit; color: inherit; margin: 0; padding: 0; border: 0; background: none; }
button { display: flex; align-items: center; justify-content: center; flex: none; }
.sprite { position: absolute; width: 0; height: 0; }

.menubar { display: flex; align-items: center; height: 16px; flex: none; padding: 0 6px 0 1px; }
.menubar button { padding: 0 5px; height: 16px; }
.menubar .close { margin-left: auto; padding: 0; width: 8px; }
.menubar .close svg { width: 8px; height: 8px; }

.toolbar { display: flex; align-items: center; flex: none; height: 28px; padding-left: 2px; }
.toolbar:not(.format) { border-top: 1px solid #e4e3e1; }
.format { height: 25px; }
.tb { width: 22px; height: 24px; border-radius: 3px; }
.tb svg { width: 16px; height: 16px; color: #555; overflow: visible; }
.tb.on { background: #d5d1cd; }
.dd { width: 7px; height: 24px; color: #111; }
.dd:disabled { color: #bbb; }
.dd svg { width: 6px; height: 4px; margin-top: 2px; flex: none; }
.sep { width: 1px; height: 22px; margin: 0 2px; background: #e2e0de; flex: none; }
.dd + .sep { margin: 0 2px 0 3px; }
.g-blue, .g-dark { font-size: 8px; }
.g-blue { fill: #2f86c9; }
.g-dark { fill: #444; }
.letter { font-size: 13px; line-height: 16px; color: #333; }
.bold { font-size: 12px; font-weight: 700; }
.italic { font: italic 14px/16px "Liberation Serif", serif; }
.under { border-bottom: 1px solid #2f86c9; line-height: 13px; font-size: 12px; }

.combo { display: flex; align-items: stretch; height: 24px; border: 1px solid #d3cfcb; border-radius: 4px; background: #fff; overflow: hidden; flex: none; }
.combo input { flex: 1; min-width: 0; padding-left: 6px; }
.combo button { width: 23px; border-left: 1px solid #dedbd8; background: #f8f7f6; color: #333; }
.combo svg, .expand svg { width: 9px; height: 6px; }
.font { width: 138px; }
.font input { font-style: italic; }
.size { width: 67px; margin-left: 5px; }
.name { width: 108px; }

.work { display: flex; flex: 1; min-height: 0; }
.doc { display: flex; flex-direction: column; flex: 1; min-width: 0; }
.formula { display: flex; align-items: center; flex: none; height: 31px; padding: 0 4px 1px 2px; }
.formula .sep { margin-right: 4px; }
.fx { width: 16px; color: #2f86c9; font: 15px/16px "Liberation Serif", serif; }
.fx em + em { font-size: 12px; padding-top: 3px; }
.sum { width: 16px; height: 20px; }
.sum svg { width: 14px; height: 14px; }
.line { flex: 1; min-width: 0; height: 18px; padding-left: 4px; border: 1px solid #d6d3d0; background: #fff; }
.expand { width: 12px; color: #222; }

.pane { display: flex; flex: 1; min-height: 0; }
.sheet { flex: 1; min-width: 0; overflow: hidden; background: #fff; }
table { width: 100%; table-layout: fixed; border-collapse: separate; border-spacing: 0; }
.c-num { width: 22px; }
.c-a { width: 28px; }
.c-b { width: 526px; }
td, th { padding: 0; }
th { background: #e1e1e0; border: solid #c2c2c1; border-width: 0 1px 1px 0; font-weight: 400; font-size: 9px; line-height: 11px; color: #444; }
tbody th { vertical-align: middle; }
thead th { height: 14px; font-size: 8px; border-top: 1px solid #c2c2c1; }
thead th:first-child { background: #f6f5f4; border-color: #f6f5f4; }
th.sel, thead th.sel { background: #3584e4; border-color: #3584e4; color: #fff; font-weight: 700; }
thead th.first { border-right-color: #2b78d6; }
td { font-family: Carlito, Lato, sans-serif; line-height: 9px; }
.title { height: 24px; }
.short { height: 13px; }
.line14 { height: 14px; }
.head { height: 18px; }
.tall { height: 28px; }
.full { height: 27px; }
.cursor { position: relative; height: 24px; background: #0f3a5a; border: solid #3584e4; border-width: 0 2px 2px 0; box-shadow: inset 0 1px #fff, inset -1px -1px #fff; color: #fff; font-size: 13px; line-height: 22px; font-weight: 700; text-align: center; }
.cursor::after { content: ""; position: absolute; right: -3px; bottom: -4px; width: 4px; height: 4px; background: #3584e4; }
.head td:nth-child(2) { padding: 0 1px 2px; background: #1b567f; color: #fff; font-size: 10px; font-weight: 700; }
.key { vertical-align: top; color: #1f4e79; font-size: 9px; font-weight: 700; position: relative; }
.key div { display: flex; justify-content: flex-end; overflow: hidden; margin: 0 1px 0 2px; white-space: nowrap; line-height: 11px; }
.cut::after { content: ""; position: absolute; left: 0; top: 11px; border: solid transparent; border-width: 3px 4px 3px 0; border-right-color: #7a0c14; }
.txt { vertical-align: middle; padding: 0 0 3px 1px; font-size: 9px; white-space: nowrap; }
.txt u { text-decoration: underline wavy #e02020 1px; text-underline-offset: 0; text-decoration-skip-ink: none; }

.vscroll { width: 10px; padding: 3px 2px; background: #cdcdcd; border-top: 2px solid #555; flex: none; margin-right: -1px; }
.thumb { background: #7f807f; border-radius: 3px; }
.vscroll .thumb { height: 48%; }
.hscroll { flex: none; padding-right: 10px; }
.track { display: flex; align-items: center; justify-content: space-between; height: 10px; padding: 0 2px; background: #cdcdcd; }
.hscroll .thumb { width: calc(47% - 5px); height: 6px; }
.split { width: 2px; height: 8px; background: #555; }

.tabs { display: flex; align-items: stretch; flex: none; height: 15px; font-size: 8px; }
.nav { width: 73px; padding: 2px 0 0 6px; }
.nav svg { width: 60px; height: 12px; display: block; }
.add { width: 18px; }
.add svg { width: 15px; height: 15px; }
.tab { padding: 0 9px; border-bottom: 2px solid transparent; position: relative; }
.tab + .tab::before { content: ""; position: absolute; left: 0; top: 3px; height: 8px; border-left: 1px solid #c8c6c4; }
.tab.active { background: #fff; font-weight: 700; border-bottom-color: #8a8a89; }

.sidebar { position: relative; width: 39px; flex: none; display: flex; flex-direction: column; align-items: center; padding-top: 2px; border-left: 1px solid #d5d3d1; }
.sidebar button { width: 28px; height: 29px; }
.sidebar svg { width: 16px; height: 16px; }
.sidebar .fx { font-size: 17px; }
.sidebar .fx em + em { font-size: 14px; }
.grip { position: absolute; left: -1px; top: 46%; width: 5px; height: 50px; background: #8f908f; }
.grip::after { content: ""; position: absolute; left: 1px; top: 23px; border: solid transparent; border-width: 2px 0 2px 3px; border-left-color: #fff; }

.status { display: grid; grid-template-columns: 22px 155fr 221fr 210fr 166fr 46px 31px 20px 20px 181fr 97px 32px; align-items: center; flex: none; height: 18px; border-top: 1px solid #d5d3d1; font-size: 8px; }
.status > span { display: flex; align-items: center; height: 13px; padding-left: 5px; white-space: nowrap; }
.status .bar { border-left: 1px solid #e0dedc; }
.status .center { justify-content: center; padding: 0; }
.status .last { padding-left: 4px; }
.status .save svg { width: 13px; height: 13px; }
.mode { width: 22px; height: 14px; }
.zoom button svg { width: 8px; height: 8px; }
.zoom input { appearance: none; width: 64px; height: 12px; margin: 0 3px; background: linear-gradient(#999, #999) center / 100% 1px no-repeat; }
.zoom input::-webkit-slider-thumb { appearance: none; width: 3px; height: 7px; border: 1px solid #444; background: #f6f5f4; }
```
